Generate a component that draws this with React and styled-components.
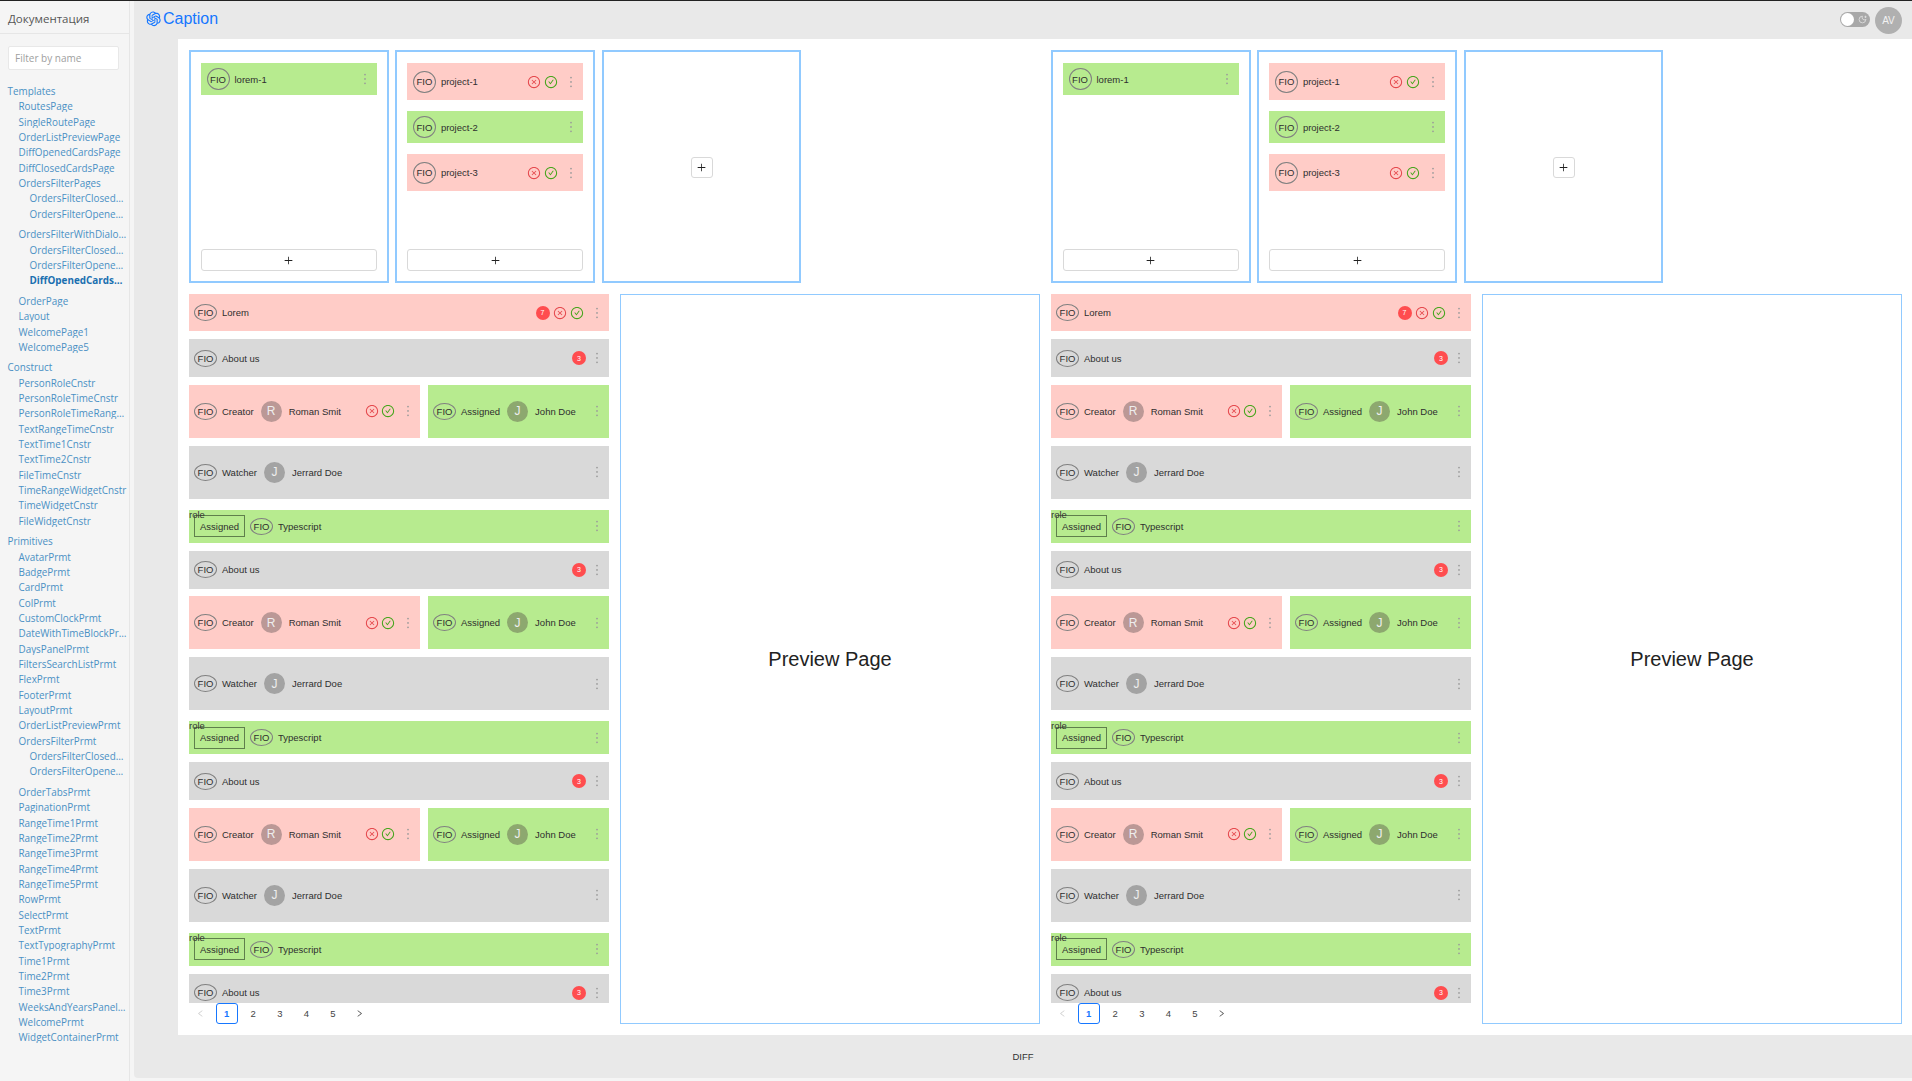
import styled, { createGlobalStyle } from 'styled-components'
import {
  AiOutlineOpenAI,
  AiOutlineCloseCircle,
  AiOutlineCheckCircle,
  AiOutlineMore,
  AiOutlinePlus,
  AiOutlineLeft,
  AiOutlineRight,
} from 'react-icons/ai'
import { MoonStar } from 'lucide-react'

const NAV = [
  {
    title: 'Templates',
    items: [
      'RoutesPage',
      'SingleRoutePage',
      'OrderListPreviewPage',
      'DiffOpenedCardsPage',
      'DiffClosedCardsPage',
      { name: 'OrdersFilterPages', sub: ['OrdersFilterClosedPage', 'OrdersFilterOpenedPage'] },
      {
        name: 'OrdersFilterWithDialogPage',
        sub: ['OrdersFilterClosedPage', 'OrdersFilterOpenedPage', 'DiffOpenedCardsPage'],
        active: 2,
      },
      'OrderPage',
      'Layout',
      'WelcomePage1',
      'WelcomePage5',
    ],
  },
  {
    title: 'Construct',
    items: [
      'PersonRoleCnstr',
      'PersonRoleTimeCnstr',
      'PersonRoleTimeRangeCnstr',
      'TextRangeTimeCnstr',
      'TextTime1Cnstr',
      'TextTime2Cnstr',
      'FileTimeCnstr',
      'TimeRangeWidgetCnstr',
      'TimeWidgetCnstr',
      'FileWidgetCnstr',
    ],
  },
  {
    title: 'Primitives',
    items: [
      'AvatarPrmt',
      'BadgePrmt',
      'CardPrmt',
      'ColPrmt',
      'CustomClockPrmt',
      'DateWithTimeBlockPrmt',
      'DaysPanelPrmt',
      'FiltersSearchListPrmt',
      'FlexPrmt',
      'FooterPrmt',
      'LayoutPrmt',
      'OrderListPreviewPrmt',
      { name: 'OrdersFilterPrmt', sub: ['OrdersFilterClosedPrmt', 'OrdersFilterOpenedPrmt'] },
      'OrderTabsPrmt',
      'PaginationPrmt',
      'RangeTime1Prmt',
      'RangeTime2Prmt',
      'RangeTime3Prmt',
      'RangeTime4Prmt',
      'RangeTime5Prmt',
      'RowPrmt',
      'SelectPrmt',
      'TextPrmt',
      'TextTypographyPrmt',
      'Time1Prmt',
      'Time2Prmt',
      'Time3Prmt',
      'WeeksAndYearsPanelPrmt',
      'WelcomePrmt',
      'WidgetContainerPrmt',
    ],
  },
]

const COLORS = { red: '#ffccc7', green: '#b7eb8f', gray: '#d9d9d9' }
const AVATARS = { red: '#bb9896', green: '#8da86f', gray: '#a3a3a3' }

const Global = createGlobalStyle`
  html, body {
    margin: 0;
    padding: 0;
    height: 100%;
  }
  body {
    background: #f5f5f5;
    font-family: "Liberation Sans", Arial, sans-serif;
    overflow: hidden;
  }
`

const Page = styled.div`
  width: 1912px;
  height: 1081px;
  box-sizing: border-box;
  border-top: 1px solid #222;
  display: flex;
  background: #f5f5f5;
`
const Sidebar = styled.aside`
  width: 130px;
  flex: none;
  box-sizing: border-box;
  border-right: 1px solid #e6e6e6;
  margin-right: 4px;
`
const SideTitle = styled.div`
  height: 33px;
  box-sizing: border-box;
  border-bottom: 1px solid #e6e6e6;
  padding-left: 8px;
  font: 11.5px/35px "Open Sans", sans-serif;
  color: #555;
`
const Filter = styled.input`
  display: block;
  width: 111px;
  height: 24px;
  box-sizing: border-box;
  margin: 12px 0 15px 8px;
  padding: 0 6px;
  border: 1px solid #e8e8e8;
  border-radius: 2px;
  background: #fff;
  font: 10px "Open Sans", sans-serif;
  outline: none;
  &::placeholder {
    color: #a0a0a0;
  }
`
const NavGroup = styled.div`
  padding-bottom: 5.3px;
`
const NavLink = styled.div`
  height: 12px;
  line-height: 12px;
  margin-bottom: 3.33px;
  padding-left: ${(p) => p.$indent * 11 + 7.5}px;
  width: ${(p) => (p.$indent === 2 ? 125 : 128)}px;
  box-sizing: border-box;
  font-family: "Open Sans", sans-serif;
  font-size: 9.9px;
  font-weight: ${(p) => (p.$active ? 700 : 400)};
  color: ${(p) => (p.$active ? '#1a6fb0' : '#4a90c4')};
  white-space: nowrap;
  overflow: hidden;
  text-overflow: ellipsis;
`

const Main = styled.div`
  flex: 1;
  min-width: 0;
  height: 1077px;
  background: #e9e9e9;
  border-bottom-left-radius: 4px;
  display: flex;
  flex-direction: column;
`
const Header = styled.header`
  height: 38px;
  flex: none;
  display: flex;
  align-items: center;
  padding: 0 10px 0 10px;
`
const Logo = styled.div`
  display: flex;
  align-items: center;
  color: #1677ff;
  font-size: 16px;
  line-height: 34px;
  height: 34px;
  margin-bottom: 3px;
  flex: 1;
`
const Toggle = styled.div`
  width: 30px;
  height: 15px;
  border-radius: 8px;
  background: #a8a8a8;
  margin: 0 5px 1px 0;
  padding: 1px;
  box-sizing: border-box;
  display: flex;
  align-items: center;
  justify-content: space-between;
  color: #e6e6e6;
`
const Knob = styled.span`
  width: 13px;
  height: 13px;
  border-radius: 50%;
  background: #fff;
`
const UserAvatar = styled.div`
  width: 27px;
  height: 27px;
  border-radius: 50%;
  background: #b0b0b0;
  color: #f2f2f2;
  font-size: 10px;
  display: flex;
  align-items: center;
  justify-content: center;
`
const Content = styled.main`
  flex: 1;
  min-height: 0;
  margin-left: 44px;
  background: #fff;
  padding: 11px 10px 11px 11px;
  display: flex;
  gap: 11px;
`
const Footer = styled.footer`
  height: 43px;
  flex: none;
  display: flex;
  align-items: center;
  justify-content: center;
  font-size: 9.5px;
  color: #333;
`
const Panel = styled.section`
  width: 851px;
  flex: none;
  display: flex;
  flex-direction: column;
  gap: 11px;
`
const Boards = styled.div`
  display: flex;
  gap: 6.9px;
`
const Board = styled.div`
  width: 199.5px;
  height: 233px;
  box-sizing: border-box;
  border: 2px solid #91caff;
  padding: 11px 10px 10px;
  display: flex;
  flex-direction: column;
  gap: 11px;
  ${(p) => p.$empty && 'align-items: center; justify-content: center;'}
`
const Card = styled.div`
  height: ${(p) => p.$h}px;
  flex: none;
  background: ${(p) => COLORS[p.$color]};
  display: flex;
  align-items: center;
  gap: 5px;
  padding: 0 4px 0 5.5px;
  font-size: 9.5px;
  color: #2e2e2e;
`
const AddButton = styled.button`
  width: ${(p) => (p.$small ? '22px' : '100%')};
  height: ${(p) => (p.$small ? '21px' : '22px')};
  flex: none;
  margin-top: ${(p) => (p.$small ? 0 : 'auto')};
  padding: 0;
  background: #fff;
  border: 1px solid #d9d9d9;
  border-radius: 3px;
  display: flex;
  align-items: center;
  justify-content: center;
  color: #222;
`
const Lower = styled.div`
  flex: 1;
  min-height: 0;
  display: flex;
  gap: 11px;
`
const ListCol = styled.div`
  width: 420px;
  flex: none;
  display: flex;
  flex-direction: column;
`
const Scroll = styled.div`
  height: 709px;
  flex: none;
  overflow: hidden;
`
const Row = styled.div`
  position: relative;
  box-sizing: border-box;
  height: ${(p) => p.$h}px;
  margin-bottom: ${(p) => p.$mb ?? 8}px;
  background: ${(p) => COLORS[p.$color]};
  display: flex;
  align-items: center;
  gap: 5px;
  padding: 0 4px 0 5px;
  font-size: 9.5px;
  color: #2e2e2e;
`
const Split = styled.div`
  display: flex;
  gap: 8px;
  margin-bottom: 8px;
`
const SplitCell = styled(Row)`
  width: ${(p) => p.$w}px;
  margin-bottom: 0;
  flex: none;
`
const Fio = styled.span`
  width: 23px;
  height: ${(p) => p.$h ?? 17}px;
  flex: none;
  box-sizing: border-box;
  border: 1px solid #808080;
  border-radius: 50%;
  display: flex;
  align-items: center;
  justify-content: center;
  font-size: 9.5px;
  color: #2e2e2e;
`
const Label = styled.span`
  white-space: nowrap;
`
const Person = styled.span`
  width: 21px;
  height: 21px;
  flex: none;
  margin: 0 2px;
  border-radius: 50%;
  background: ${(p) => AVATARS[p.$color]};
  color: #eee;
  font-size: 12px;
  display: flex;
  align-items: center;
  justify-content: center;
`
const Spacer = styled.span`
  flex: 1;
`
const Badge = styled.span`
  width: 14px;
  height: 14px;
  flex: none;
  margin-right: ${(p) => p.$mr ?? 0}px;
  border-radius: 50%;
  background: #ff4d4f;
  color: #fff;
  font-size: 7px;
  display: flex;
  align-items: center;
  justify-content: center;
`
const Dots = styled.span`
  width: 16px;
  height: 16px;
  flex: none;
  margin-left: ${(p) => p.$ml ?? 0}px;
  display: flex;
  align-items: center;
  justify-content: center;
  color: #9a9a9a;
`
const ActionGroup = styled.span`
  display: flex;
  flex: none;
  gap: ${(p) => p.$gap ?? 3}px;
`
const Cross = styled(AiOutlineCloseCircle)`
  color: #e5484d;
`
const Check = styled(AiOutlineCheckCircle)`
  color: #46a51c;
`
const RoleLabel = styled.span`
  position: absolute;
  left: 0;
  top: -1px;
  font-size: 9.5px;
  line-height: 11px;
  color: #333;
`
const RoleBox = styled.span`
  width: 51px;
  height: 22px;
  box-sizing: border-box;
  flex: none;
  border: 1px solid #5f7f4c;
  display: flex;
  align-items: center;
  justify-content: center;
`
const Pager = styled.nav`
  display: flex;
  gap: 4.6px;
  height: 21px;
  align-items: center;
`
const PageItem = styled.span`
  width: 22px;
  height: 21px;
  box-sizing: border-box;
  display: flex;
  align-items: center;
  justify-content: center;
  font-size: 9.5px;
  font-weight: ${(p) => (p.$active ? 700 : 400)};
  color: ${(p) => (p.$active ? '#1677ff' : p.$muted ? '#ccc' : '#444')};
  border: ${(p) => (p.$active ? '1px solid #1677ff' : 'none')};
  border-radius: 3px;
`
const Preview = styled.div`
  width: 420px;
  height: 730px;
  flex: none;
  box-sizing: border-box;
  border: 1px solid #91caff;
  display: flex;
  align-items: center;
  justify-content: center;
  font-size: 20px;
  color: #222;
`

const Actions = ({ gap }) => (
  <ActionGroup $gap={gap}>
    <Cross size={14} />
    <Check size={14} />
  </ActionGroup>
)

const More = ({ ml }) => (
  <Dots $ml={ml}>
    <AiOutlineMore size={16} />
  </Dots>
)

const ProjectCard = ({ name, color, h, actions }) => (
  <Card $color={color} $h={h}>
    <Fio $h={22}>FIO</Fio>
    <Label>{name}</Label>
    <Spacer />
    {actions && <Actions />}
    <More />
  </Card>
)

const AddIcon = () => <AiOutlinePlus size={11} />

const BoardsRow = () => (
  <Boards>
    <Board>
      <ProjectCard name="lorem-1" color="green" h={32} />
      <AddButton>
        <AddIcon />
      </AddButton>
    </Board>
    <Board>
      <ProjectCard name="project-1" color="red" h={37} actions />
      <ProjectCard name="project-2" color="green" h={32} />
      <ProjectCard name="project-3" color="red" h={37} actions />
      <AddButton>
        <AddIcon />
      </AddButton>
    </Board>
    <Board $empty>
      <AddButton $small>
        <AddIcon />
      </AddButton>
    </Board>
  </Boards>
)

const AboutRow = ({ h = 38, mb = 7.5 }) => (
  <Row $color="gray" $h={h} $mb={mb}>
    <Fio>FIO</Fio>
    <Label>About us</Label>
    <Spacer />
    <Badge>3</Badge>
    <More ml={-2} />
  </Row>
)

const RowsGroup = () => (
  <>
    <AboutRow />
    <Split>
      <SplitCell $color="red" $h={53} $w={231}>
        <Fio>FIO</Fio>
        <Label>Creator</Label>
        <Person $color="red">R</Person>
        <Label>Roman Smit</Label>
        <Spacer />
        <Actions gap={2} />
        <More ml={0} />
      </SplitCell>
      <SplitCell $color="green" $h={53} $w={181}>
        <Fio>FIO</Fio>
        <Label>Assigned</Label>
        <Person $color="green">J</Person>
        <Label>John Doe</Label>
        <Spacer />
        <More />
      </SplitCell>
    </Split>
    <Row $color="gray" $h={53} $mb={11}>
      <Fio>FIO</Fio>
      <Label>Watcher</Label>
      <Person $color="gray">J</Person>
      <Label>Jerrard Doe</Label>
      <Spacer />
      <More />
    </Row>
    <Row $color="green" $h={33}>
      <RoleLabel>role</RoleLabel>
      <RoleBox>Assigned</RoleBox>
      <Fio>FIO</Fio>
      <Label>Typescript</Label>
      <Spacer />
      <More />
    </Row>
  </>
)

const ListSide = () => (
  <ListCol>
    <Scroll>
      <Row $color="red" $h={37}>
        <Fio>FIO</Fio>
        <Label>Lorem</Label>
        <Spacer />
        <Badge $mr={-1.5}>7</Badge>
        <Actions />
        <More />
      </Row>
      <RowsGroup />
      <RowsGroup />
      <RowsGroup />
      <AboutRow />
    </Scroll>
    <Pager>
      <PageItem $muted>
        <AiOutlineLeft size={9} />
      </PageItem>
      {[1, 2, 3, 4, 5].map((n) => (
        <PageItem key={n} $active={n === 1}>
          {n}
        </PageItem>
      ))}
      <PageItem>
        <AiOutlineRight size={9} />
      </PageItem>
    </Pager>
  </ListCol>
)

const DiffPanel = () => (
  <Panel>
    <BoardsRow />
    <Lower>
      <ListSide />
      <Preview>Preview Page</Preview>
    </Lower>
  </Panel>
)

const App = () => (
  <Page>
    <Global />
    <Sidebar>
      <SideTitle>Документация</SideTitle>
      <Filter placeholder="Filter by name" />
      {NAV.map((group) => (
        <NavGroup key={group.title}>
          <NavLink $indent={0}>{group.title}</NavLink>
          {group.items.map((item) =>
            typeof item === 'string' ? (
              <NavLink key={item} $indent={1}>
                {item}
              </NavLink>
            ) : (
              <NavGroup key={item.name}>
                <NavLink $indent={1}>{item.name}</NavLink>
                {item.sub.map((sub, i) => (
                  <NavLink key={sub} $indent={2} $active={item.active === i}>
                    {sub}
                  </NavLink>
                ))}
              </NavGroup>
            ),
          )}
        </NavGroup>
      ))}
    </Sidebar>
    <Main>
      <Header>
        <Logo>
          <AiOutlineOpenAI size={19} />
          Caption
        </Logo>
        <Toggle>
          <Knob />
          <MoonStar size={9} style={{ marginRight: 2 }} />
        </Toggle>
        <UserAvatar>AV</UserAvatar>
      </Header>
      <Content>
        <DiffPanel />
        <DiffPanel />
      </Content>
      <Footer>DIFF</Footer>
    </Main>
  </Page>
)

export default App
